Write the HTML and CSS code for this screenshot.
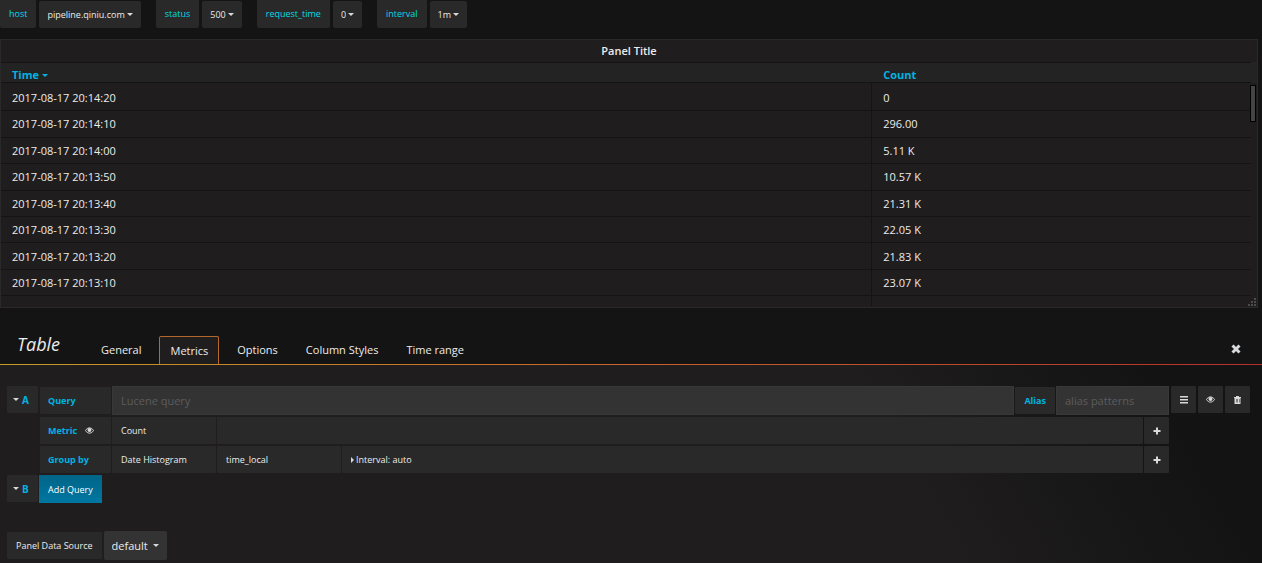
FILE: index.html
```html
<!DOCTYPE html>
<html lang="en">
<head>
    <meta charset="UTF-8">
    <meta name="viewport" content="width=device-width, initial-scale=1.0">
    <title>Panel Title</title>
    <link rel="stylesheet" href="styles.css">
</head>
<body>
    <div class="submenu">
        <div class="variable">
            <label for="var-host">host</label>
            <span class="dropdown"><select id="var-host"><option>pipeline.qiniu.com</option></select></span>
        </div>
        <div class="variable">
            <label for="var-status">status</label>
            <span class="dropdown"><select id="var-status"><option>500</option></select></span>
        </div>
        <div class="variable">
            <label for="var-request-time">request_time</label>
            <span class="dropdown"><select id="var-request-time"><option>0</option></select></span>
        </div>
        <div class="variable">
            <label for="var-interval">interval</label>
            <span class="dropdown"><select id="var-interval"><option>1m</option></select></span>
        </div>
    </div>

    <section class="panel">
        <h1 class="panel-title">Panel Title</h1>
        <div class="panel-scroll">
            <table>
                <thead>
                    <tr>
                        <th class="col-time">Time <span class="caret sort"></span></th>
                        <th>Count</th>
                    </tr>
                </thead>
                <tbody>
                    <tr><td>2017-08-17 20:14:20</td><td>0</td></tr>
                    <tr><td>2017-08-17 20:14:10</td><td>296.00</td></tr>
                    <tr><td>2017-08-17 20:14:00</td><td>5.11 K</td></tr>
                    <tr><td>2017-08-17 20:13:50</td><td>10.57 K</td></tr>
                    <tr><td>2017-08-17 20:13:40</td><td>21.31 K</td></tr>
                    <tr><td>2017-08-17 20:13:30</td><td>22.05 K</td></tr>
                    <tr><td>2017-08-17 20:13:20</td><td>21.83 K</td></tr>
                    <tr><td>2017-08-17 20:13:10</td><td>23.07 K</td></tr>
                    <tr><td>2017-08-17 20:13:00</td><td>22.64 K</td></tr>
                </tbody>
            </table>
        </div>
        <div class="scroll-thumb"></div>
        <svg class="resize-grip" width="9" height="9" viewBox="0 0 9 9">
            <path d="M6 0h2v2h-2zM3 3h2v2h-2zM6 3h2v2h-2zM0 6h2v2h-2zM3 6h2v2h-2zM6 6h2v2h-2z"/>
        </svg>
    </section>

    <div class="editor-header">
        <h2>Table</h2>
        <nav class="tabs">
            <a href="#general">General</a>
            <a href="#metrics" class="active">Metrics</a>
            <a href="#options">Options</a>
            <a href="#column-styles">Column Styles</a>
            <a href="#time-range">Time range</a>
        </nav>
        <button class="close" aria-label="Close">
            <svg width="10" height="10" viewBox="0 0 10 10"><path d="M1.5 1.5l7 7M8.5 1.5l-7 7"/></svg>
        </button>
    </div>

    <div class="editor-body">
        <div class="query">
            <button class="letter"><span class="caret"></span>A</button>
            <div class="query-rows">
                <div class="row">
                    <label class="cell key" for="query">Query</label>
                    <input class="grow" type="text" id="query" placeholder="Lucene query">
                    <label class="cell key-alias" for="alias">Alias</label>
                    <input class="alias" type="text" id="alias" placeholder="alias patterns">
                </div>
                <div class="row">
                    <div class="cell key">Metric
                        <button class="icon" aria-label="Toggle metric">
                            <svg width="9" height="7" viewBox="0 0 18 14"><path class="eye" d="M1 7C5 0 13 0 17 7C13 14 5 14 1 7Z"/><circle cx="9" cy="6" r="4"/></svg>
                        </button>
                    </div>
                    <button class="cell agg">Count</button>
                    <div class="cell grow"></div>
                    <button class="cell square" aria-label="Add metric">
                        <svg width="8" height="8" viewBox="0 0 8 8"><path d="M3 0.5h2v2.5h2.5v2h-2.5v2.5h-2v-2.5h-2.5v-2h2.5z"/></svg>
                    </button>
                </div>
                <div class="row">
                    <div class="cell key">Group by</div>
                    <button class="cell agg">Date Histogram</button>
                    <button class="cell field">time_local</button>
                    <button class="cell grow"><span class="caret right"></span>Interval: auto</button>
                    <button class="cell square" aria-label="Add group by">
                        <svg width="8" height="8" viewBox="0 0 8 8"><path d="M3 0.5h2v2.5h2.5v2h-2.5v2.5h-2v-2.5h-2.5v-2h2.5z"/></svg>
                    </button>
                </div>
            </div>
            <div class="actions">
                <button class="cell square" aria-label="Menu">
                    <svg width="8" height="8" viewBox="0 0 8 8"><path d="M0 0h8v1.5h-8zM0 3h8v1.5h-8zM0 6h8v1.5h-8z"/></svg>
                </button>
                <button class="cell square" aria-label="Toggle query">
                    <svg width="9" height="7" viewBox="0 0 18 14"><path class="eye" d="M1 7C5 0 13 0 17 7C13 14 5 14 1 7Z"/><circle cx="9" cy="6" r="4"/></svg>
                </button>
                <button class="cell square" aria-label="Delete query">
                    <svg width="7" height="8" viewBox="0 0 14 16"><path fill-rule="evenodd" d="M4 0h6v2h4v2h-1v12h-12v-12h-1v-2h4zM4 6v7h1v-7zM7 6v7h1v-7zM10 6v7h1v-7z"/></svg>
                </button>
            </div>
        </div>

        <div class="query query-new">
            <button class="letter"><span class="caret"></span>B</button>
            <button class="add-query">Add Query</button>
        </div>

        <div class="datasource">
            <label class="cell" for="datasource">Panel Data Source</label>
            <span class="dropdown large"><select id="datasource"><option>default</option></select></span>
        </div>
    </div>
</body>
</html>
```
FILE: styles.css
```css
* {
    box-sizing: border-box;
}
body {
    margin: 0;
    background: #141414;
    color: #ececec;
    font-family: "Open Sans", "Noto Sans", sans-serif;
    font-size: 9px;
}
button, input, select {
    font: inherit;
    color: inherit;
    border: 0;
    border-radius: 0;
    margin: 0;
    background: none;
}
svg {
    display: block;
    fill: #d8d9da;
}
.caret {
    display: inline-block;
    border: 3px solid transparent;
    border-top-color: currentColor;
    border-bottom: 0;
}
.caret.right {
    border: 3px solid transparent;
    border-left-color: #d8d9da;
    border-right: 0;
    margin-right: 2px;
}

/* template variables */
.submenu {
    display: flex;
    gap: 15px;
    height: 28px;
}
.variable {
    display: flex;
    gap: 3px;
}
.variable label {
    padding: 0 9px;
    line-height: 27px;
    color: #00dce4;
    background: #292929;
    border-radius: 0 0 2px 2px;
}
.dropdown {
    display: grid;
    align-items: center;
    margin-top: 1px;
    background: #292929;
    border-radius: 2px;
}
.dropdown select, .dropdown::after {
    grid-area: 1 / 1;
}
.dropdown select {
    appearance: none;
    field-sizing: content;
    height: 27px;
    padding: 0 16px 0 8px;
}
.dropdown::after {
    content: "";
    justify-self: end;
    margin-right: 8px;
    border: 3px solid transparent;
    border-top-color: #d8d9da;
    border-bottom: 0;
    pointer-events: none;
}

/* table panel */
.panel {
    position: relative;
    margin: 11px 4px 0 0;
    padding-bottom: 1px;
    border: 1px solid #292929;
    background: #1f1d1e;
    font-size: 11px;
}
.panel-title {
    margin: 0;
    font-size: 11px;
    font-weight: 600;
    line-height: 22px;
    text-align: center;
}
.panel-scroll {
    height: 244px;
    padding-right: 6px;
    overflow: hidden;
}
table {
    width: 100%;
    height: 261px;
    border-collapse: separate;
    border-spacing: 0;
    table-layout: fixed;
}
.col-time {
    width: 69.7%;
}
th {
    height: 21px;
    padding: 4px 11px 0;
    line-height: 15px;
    text-align: left;
    color: #00b3e1;
    background: #242324;
    border-top: 1px solid #141414;
    border-bottom: 1px solid #141414;
}
th:last-child {
    box-shadow: 6px 0 0 #242324;
}
td {
    padding: 0 11px;
    line-height: 15px;
    border-bottom: 1px solid #141414;
}
tbody tr:first-child td {
    padding-top: 1px;
}
td:first-child {
    border-right: 1px solid #141414;
}
.sort {
    vertical-align: 2px;
}
.scroll-thumb {
    position: absolute;
    top: 45px;
    right: 1px;
    width: 6px;
    height: 37px;
    border: 1px solid #000;
    background: #444;
}
.resize-grip {
    position: absolute;
    right: 0;
    bottom: 0;
    fill: #4c4c4c;
}

/* editor tabs */
.editor-header {
    display: flex;
    height: 57px;
    padding: 0 21px 1px 17px;
    background: linear-gradient(90deg, #c89b28, #c8642c 50%, #b5302a) bottom / 100% 1px no-repeat;
}
h2 {
    width: 74px;
    margin: 22px 0 0;
    font-size: 18px;
    font-style: italic;
    font-weight: 400;
    line-height: 28px;
}
.tabs {
    display: flex;
    flex: 1;
    align-items: flex-end;
    gap: 8px;
    font-size: 11px;
}
.tabs a {
    height: 28px;
    padding: 0 10px;
    line-height: 28px;
    color: #ececec;
    text-decoration: none;
}
.tabs .active {
    border: 1px solid #b5682c;
    border-bottom: 0;
    border-radius: 2px 2px 0 0;
    background: #1f1d1e;
}
.close {
    align-self: flex-end;
    padding: 0;
    margin-bottom: 10px;
}
.close svg {
    stroke: #d8d9da;
    stroke-width: 3;
}

/* query editor */
.editor-body {
    min-height: 197px;
    padding: 21px 12px 3px 7px;
    background: linear-gradient(60deg, #1f1d1e 70%, #131313 92%);
}
.query {
    display: flex;
    align-items: flex-start;
    gap: 2px;
    margin-bottom: 2px;
}
.query-new {
    gap: 1px;
}
.query-rows {
    display: flex;
    flex: 1;
    flex-direction: column;
    gap: 2px;
}
.row {
    display: flex;
    align-items: center;
    gap: 1px;
}
.actions {
    display: flex;
    gap: 2px;
}
.cell, .letter {
    display: flex;
    align-items: center;
    height: 27px;
    padding: 0 9px;
    background: #292929;
    border-radius: 1px;
}
.letter {
    gap: 3px;
    width: 31px;
    padding: 0 6px;
    font-size: 10px;
    font-weight: 700;
    color: #00b3e1;
}
.letter .caret {
    border-top-color: #d8d9da;
}
.key, .key-alias {
    color: #00b3e1;
    font-weight: 700;
}
.key {
    width: 71px;
    padding: 0 8px;
}
.icon {
    padding: 0 0 0 8px;
}
.eye {
    fill: none;
    stroke: #d8d9da;
    stroke-width: 2;
}
.agg {
    width: 104px;
}
.field {
    width: 124px;
}
.grow {
    flex: 1;
}
.cell.square {
    justify-content: center;
    width: 25px;
    padding: 0;
}
input {
    height: 29px;
    padding: 0 8px;
    font-size: 11px;
    background: #333;
    border: 1px solid #383838;
}
input::placeholder {
    color: #5c5c5c;
}
.alias {
    width: 113px;
}
.add-query {
    height: 28px;
    padding: 0 9px;
    color: #fff;
    background: linear-gradient(#006488, #0077a2);
}
.datasource {
    display: flex;
    align-items: center;
    gap: 2px;
    margin-top: 28px;
}
.dropdown.large {
    margin: 0;
    font-size: 11px;
    background: #333;
}
.large select {
    height: 29px;
    padding: 0 19px 0 8px;
}
```
